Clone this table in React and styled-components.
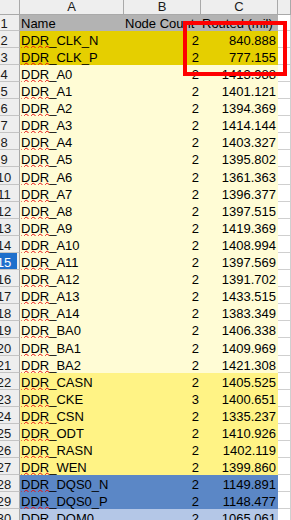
import React from 'react';
import styled, { createGlobalStyle, css } from 'styled-components';

const GlobalStyle = createGlobalStyle`
  html, body { margin: 0; padding: 0; background: #ffffff; }
  body { font-family: "Liberation Sans", Arial, sans-serif; }
  * { box-sizing: border-box; }
`;

const FILLS = {
  head: '#b3b3b3',
  gold: '#e5cf00',
  cream: '#fffcd5',
  lemon: '#fff385',
  blue: '#5b87c6',
  sky: '#b4c7e7',
};

const GRID = '#cfcfcf';
const HEAD_BG = '#eeeeee';
const HEAD_LINE = '#a9a9a9';
const COLS = '20px 104px 77px 77px 1fr';

const data = [
  ['Name', 'Node Count', 'Routed (mil)', 'head'],
  ['DDR_CLK_N', '2', '840.888', 'gold'],
  ['DDR_CLK_P', '2', '777.155', 'gold'],
  ['DDR_A0', '2', '1413.988', 'cream'],
  ['DDR_A1', '2', '1401.121', 'cream'],
  ['DDR_A2', '2', '1394.369', 'cream'],
  ['DDR_A3', '2', '1414.144', 'cream'],
  ['DDR_A4', '2', '1403.327', 'cream'],
  ['DDR_A5', '2', '1395.802', 'cream'],
  ['DDR_A6', '2', '1361.363', 'cream'],
  ['DDR_A7', '2', '1396.377', 'cream'],
  ['DDR_A8', '2', '1397.515', 'cream'],
  ['DDR_A9', '2', '1419.369', 'cream'],
  ['DDR_A10', '2', '1408.994', 'cream'],
  ['DDR_A11', '2', '1397.569', 'cream'],
  ['DDR_A12', '2', '1391.702', 'cream'],
  ['DDR_A13', '2', '1433.515', 'cream'],
  ['DDR_A14', '2', '1383.349', 'cream'],
  ['DDR_BA0', '2', '1406.338', 'cream'],
  ['DDR_BA1', '2', '1409.969', 'cream'],
  ['DDR_BA2', '2', '1421.308', 'cream'],
  ['DDR_CASN', '2', '1405.525', 'lemon'],
  ['DDR_CKE', '3', '1400.651', 'lemon'],
  ['DDR_CSN', '2', '1335.237', 'lemon'],
  ['DDR_ODT', '2', '1410.926', 'lemon'],
  ['DDR_RASN', '2', '1402.119', 'lemon'],
  ['DDR_WEN', '2', '1399.860', 'lemon'],
  ['DDR_DQS0_N', '2', '1149.891', 'blue'],
  ['DDR_DQS0_P', '2', '1148.477', 'blue'],
  ['DDR_DQM0', '2', '1065.061', 'sky'],
];

const Sheet = styled.div`
  position: relative;
  width: 291px;
  height: 520px;
  overflow: hidden;
  background: #ffffff;
  font-size: 13px;
  color: #000000;
`;

const Row = styled.div`
  display: grid;
  grid-template-columns: ${COLS};
  height: ${(p) => p.$h}px;
`;

const Corner = styled.div`
  background: ${HEAD_BG};
  border-right: 1px solid ${HEAD_LINE};
  border-bottom: 1px solid ${HEAD_LINE};
`;

const ColHead = styled.div`
  background: ${HEAD_BG};
  border-right: 1px solid ${HEAD_LINE};
  border-bottom: 1px solid ${HEAD_LINE};
  display: flex;
  align-items: center;
  justify-content: center;
  line-height: 14px;
  color: #1a1a1a;
`;

const RowHead = styled.div`
  background: ${HEAD_BG};
  border-right: 1px solid ${HEAD_LINE};
  border-bottom: 1px solid #c4c4c4;
  display: flex;
  align-items: flex-end;
  justify-content: center;
  padding-right: 11px;
  line-height: 13px;
  overflow: hidden;
  white-space: nowrap;
  color: #1a1a1a;
  ${(p) =>
    p.$active &&
    css`
      background: linear-gradient(to right, #1f6fcc 0 17px, ${HEAD_BG} 17px);
      color: #ffffff;
    `}
`;

const Cell = styled.div`
  background: ${(p) => (p.$fill ? FILLS[p.$fill] : '#ffffff')};
  border-right: 1px solid ${(p) => (p.$fill ? FILLS[p.$fill] : GRID)};
  border-bottom: 1px solid ${(p) => (p.$fill ? FILLS[p.$fill] : GRID)};
  display: flex;
  align-items: flex-end;
  justify-content: ${(p) => (p.$right ? 'flex-end' : 'flex-start')};
  padding: 0 ${(p) => (p.$right ? '1px' : '0')} 0 1px;
  line-height: 13px;
  white-space: nowrap;
`;

const Misspelled = styled.span`
  text-decoration-line: underline;
  text-decoration-style: wavy;
  text-decoration-color: #e81010;
  text-decoration-thickness: 1px;
  text-underline-offset: 0px;
  text-decoration-skip-ink: none;
`;

const Highlight = styled.div`
  position: absolute;
  left: 183px;
  top: 21px;
  width: 104px;
  height: 55px;
  border: 4px solid #ff0000;
  pointer-events: none;
`;

function NameText({ value }) {
  if (value.startsWith('DDR')) {
    return (
      <span>
        <Misspelled>DDR</Misspelled>
        {value.slice(3)}
      </span>
    );
  }
  return <span>{value}</span>;
}

function rowHeight(n) {
  if (n === 1) return 16;
  if (n === 10 || n === 20) return 18;
  return 17;
}

export default function App() {
  return (
    <>
      <GlobalStyle />
      <Sheet>
        <Row $h={15}>
          <Corner />
          <ColHead>A</ColHead>
          <ColHead>B</ColHead>
          <ColHead>C</ColHead>
          <ColHead />
        </Row>
        {data.map(([name, count, len, fill], i) => {
          const n = i + 1;
          const title = n === 1;
          return (
            <Row key={n} $h={rowHeight(n)}>
              <RowHead $active={n === 15}>{n}</RowHead>
              <Cell $fill={fill}>
                <NameText value={name} />
              </Cell>
              <Cell $fill={fill} $right={!title}>
                {count}
              </Cell>
              <Cell $fill={fill} $right={!title}>
                {len}
              </Cell>
              <Cell />
            </Row>
          );
        })}
        <Highlight />
      </Sheet>
    </>
  );
}
